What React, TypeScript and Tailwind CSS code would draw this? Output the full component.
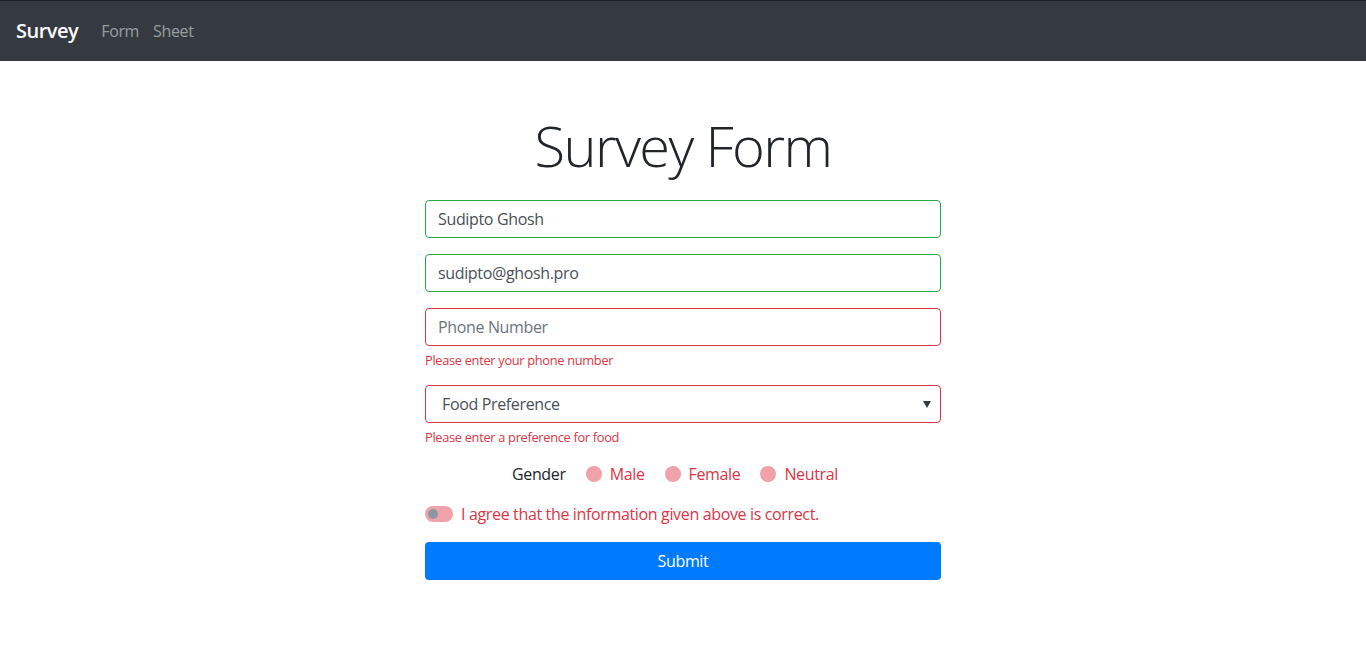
import React from "react";

const font = { fontFamily: '"Segoe UI", "Open Sans", "Noto Sans", sans-serif' };

export default function App() {
  return (
    <div className="min-h-[665px] bg-white text-[#212529] tracking-[-0.35px]" style={font}>
      <nav className="h-[61px] bg-[#343a40] border-t border-[#1e2226] flex items-center px-4">
        <span className="text-white text-[20px] font-semibold mr-[23px] tracking-[-0.5px]">Survey</span>
        <span className="text-[16px] text-white/50 mr-[14px]">Form</span>
        <span className="text-[16px] text-white/50">Sheet</span>
      </nav>
      <div className="w-[516px] mx-auto">
        <h1 className="text-[56px] font-light text-center leading-[1.2] mt-[51px] mb-[21px] tracking-[-1.6px]">Survey Form</h1>
        <div className="flex flex-col">
          <input
            className="h-[38px] w-full border border-[#28a745] rounded px-3 text-[16px] text-[#495057] outline-none"
            defaultValue="Sudipto Ghosh"
          />
          <input
            className="h-[38px] w-full border border-[#28a745] rounded px-3 text-[16px] text-[#495057] outline-none mt-4"
            defaultValue="sudipto@ghosh.pro"
          />
          <input
            className="h-[38px] w-full border border-[#dc3545] rounded px-3 text-[16px] text-[#495057] placeholder:text-[#6c757d] outline-none mt-4"
            placeholder="Phone Number"
          />
          <div className="text-[12.8px] text-[#dc3545] mt-[5px] leading-[19px] tracking-[-0.3px]">Please enter your phone number</div>
          <div className="relative h-[38px] w-full border border-[#dc3545] rounded mt-[15px] flex items-center pl-4 text-[16px] text-[#495057]">
            Food Preference
            <svg className="absolute right-[9px] top-[15px]" width="8" height="7" viewBox="0 0 8 7">
              <path d="M0 0h8L4 7z" fill="#343a40" />
            </svg>
          </div>
          <div className="text-[12.8px] text-[#dc3545] mt-[5px] leading-[19px] tracking-[-0.3px]">Please enter a preference for food</div>
          <div className="flex items-center justify-center h-6 mt-[15px] text-[16px]">
            <span className="mr-5">Gender</span>
            <span className="w-4 h-4 rounded-full bg-[#efa2a9] mr-2" />
            <span className="text-[#dc3545] mr-5">Male</span>
            <span className="w-4 h-4 rounded-full bg-[#efa2a9] mr-2" />
            <span className="text-[#dc3545] mr-5">Female</span>
            <span className="w-4 h-4 rounded-full bg-[#efa2a9] mr-2" />
            <span className="text-[#dc3545] mr-4">Neutral</span>
          </div>
          <div className="flex items-center h-6 mt-4 text-[16px]">
            <span className="relative w-7 h-4 rounded-full bg-[#efa2a9] mr-2">
              <span className="absolute left-[3px] top-[3px] w-[10px] h-[10px] rounded-full bg-[#8a97a4]" />
            </span>
            <span className="text-[#dc3545]">I agree that the information given above is correct.</span>
          </div>
          <button className="h-[38px] w-full bg-[#007bff] text-white rounded text-[16px] mt-4">Submit</button>
        </div>
      </div>
    </div>
  );
}
